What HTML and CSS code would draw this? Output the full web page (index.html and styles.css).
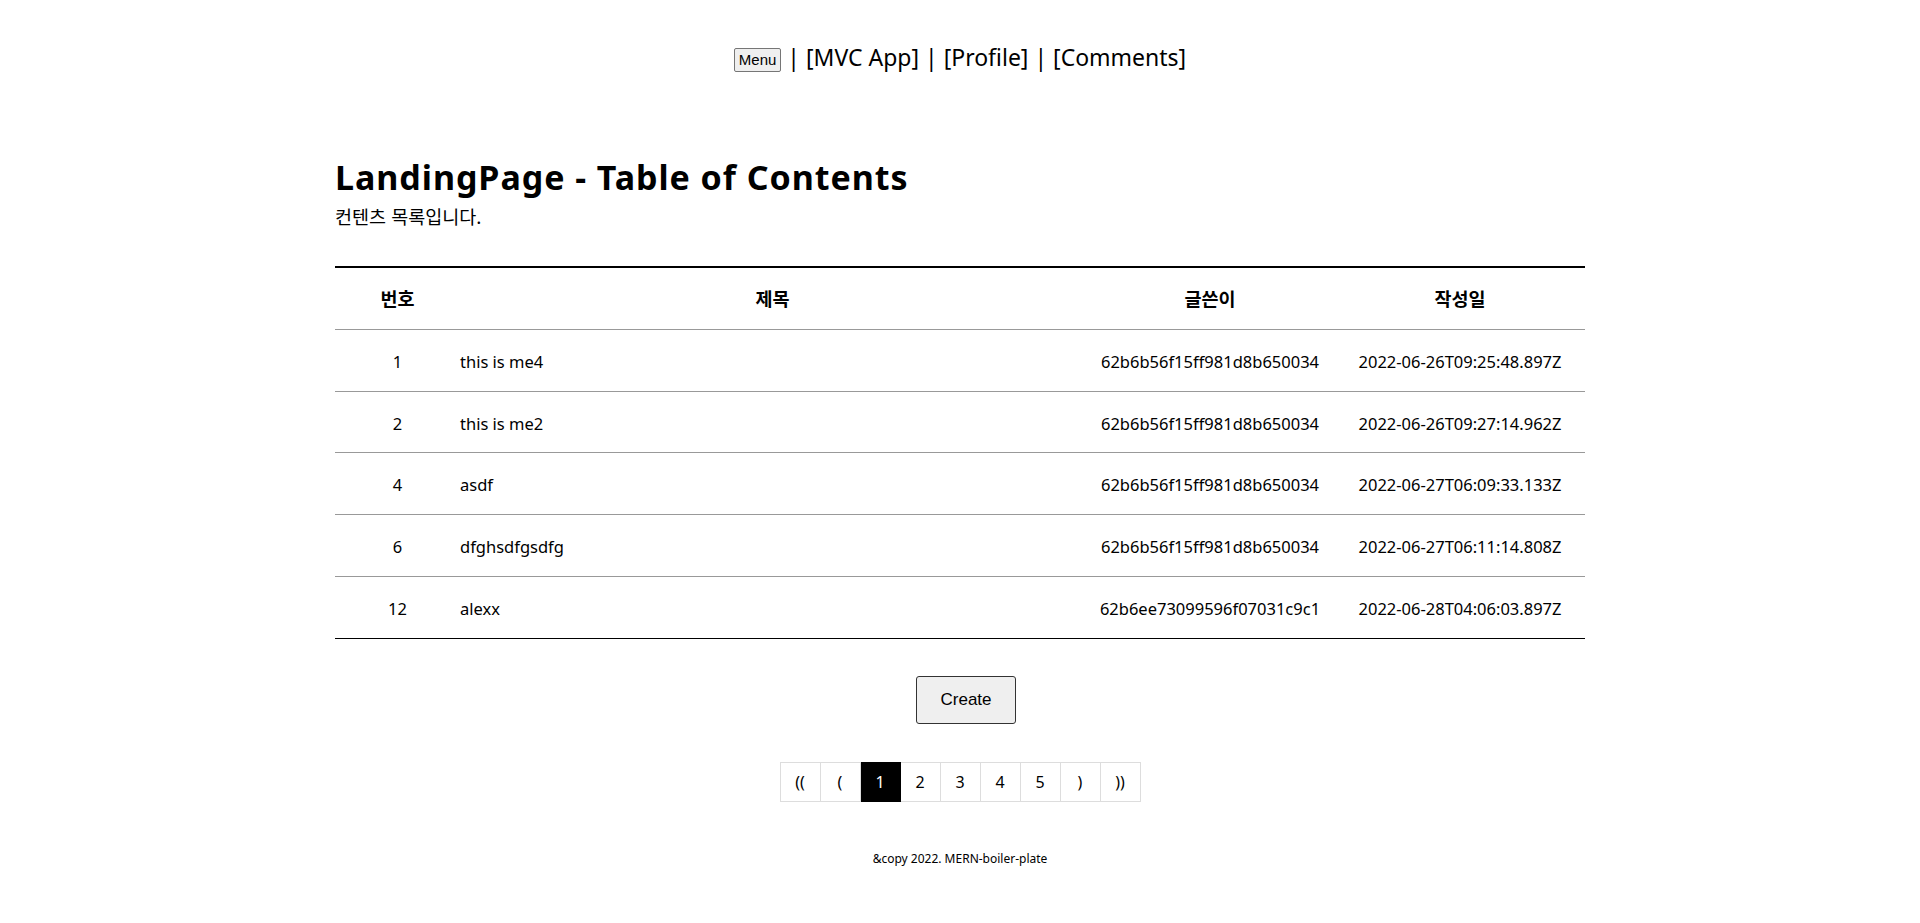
FILE: index.html
```html
<!DOCTYPE html>
<html lang="ko">
<head>
<meta charset="utf-8">
<title>LandingPage</title>
<link rel="stylesheet" href="styles.css">
</head>
<body>
<header class="topnav">
  <button class="menu-btn" type="button">Menu</button> | [MVC App] | [Profile] | [Comments]
</header>
<main class="container">
  <h1 class="page-title">LandingPage - Table of Contents</h1>
  <p class="page-desc">컨텐츠 목록입니다.</p>
  <table class="board">
    <colgroup>
      <col class="col-no">
      <col class="col-title">
      <col class="col-author">
      <col class="col-date">
    </colgroup>
    <thead>
      <tr><th>번호</th><th>제목</th><th>글쓴이</th><th>작성일</th></tr>
    </thead>
    <tbody>
      <tr><td class="c">1</td><td class="t">this is me4</td><td class="c">62b6b56f15ff981d8b650034</td><td class="c">2022-06-26T09:25:48.897Z</td></tr>
      <tr><td class="c">2</td><td class="t">this is me2</td><td class="c">62b6b56f15ff981d8b650034</td><td class="c">2022-06-26T09:27:14.962Z</td></tr>
      <tr><td class="c">4</td><td class="t">asdf</td><td class="c">62b6b56f15ff981d8b650034</td><td class="c">2022-06-27T06:09:33.133Z</td></tr>
      <tr><td class="c">6</td><td class="t">dfghsdfgsdfg</td><td class="c">62b6b56f15ff981d8b650034</td><td class="c">2022-06-27T06:11:14.808Z</td></tr>
      <tr><td class="c">12</td><td class="t">alexx</td><td class="c">62b6ee73099596f07031c9c1</td><td class="c">2022-06-28T04:06:03.897Z</td></tr>
    </tbody>
  </table>
  <div class="actions">
    <button class="create-btn" type="button">Create</button>
  </div>
  <nav class="pager">
    <a class="pg">((</a>
    <a class="pg">(</a>
    <a class="pg active">1</a>
    <a class="pg">2</a>
    <a class="pg">3</a>
    <a class="pg">4</a>
    <a class="pg">5</a>
    <a class="pg">)</a>
    <a class="pg">))</a>
  </nav>
</main>
<footer class="foot">&amp;copy 2022. MERN-boiler-plate</footer>
</body>
</html>
```
FILE: styles.css
```css
html, body {
  margin: 0;
  padding: 0;
  background: #fff;
  color: #000;
}
body {
  font-family: "Noto Sans", "Noto Sans CJK KR", sans-serif;
}
.topnav {
  padding-top: 41px;
  height: 32px;
  text-align: center;
  font-size: 23px;
  line-height: 32px;
}
.menu-btn {
  font-family: "Liberation Sans", Arial, sans-serif;
  font-size: 15px;
  line-height: 17px;
  padding: 2px 4px;
  height: 24px;
  background: #efefef;
  border: 1px solid #767676;
  border-radius: 2px;
  color: #000;
  vertical-align: 1px;
}
.container {
  width: 1250px;
  margin: 84px auto 0;
}
.page-title {
  margin: 0;
  font-size: 34px;
  line-height: 40px;
  font-weight: 700;
  letter-spacing: 0.95px;
}
.page-desc {
  margin: 7px 0 0;
  font-size: 18.5px;
  line-height: 24px;
  font-family: "Noto Sans CJK KR", sans-serif;
}
.board {
  width: 100%;
  margin-top: 38px;
  border-collapse: collapse;
  border-top: 2px solid #000;
  border-bottom: 1px solid #000;
  font-size: 16.5px;
}
.col-no { width: 10%; }
.col-title { width: 50%; }
.col-author { width: 20%; }
.col-date { width: 20%; }
.board th {
  font-family: "Noto Sans CJK KR", sans-serif;
  font-size: 18.5px;
  font-weight: 700;
  padding: 20px 0;
  line-height: 21px;
  border-bottom: 1px solid #999;
  text-align: center;
}
.board td {
  padding: 22px 0 18px;
  line-height: 20.7px;
  border-bottom: 1px solid #999;
}
.board tbody tr:last-child td {
  border-bottom: 1px solid #000;
}
.board .c { text-align: center; }
.board .t { text-align: left; }
.actions {
  display: flex;
  justify-content: center;
  margin-top: 37px;
  padding-left: 12px;
}
.create-btn {
  font-family: "Liberation Sans", Arial, sans-serif;
  font-size: 17px;
  line-height: 18px;
  padding: 14px 0;
  width: 100px;
  height: 48px;
  background: #efefef;
  border: 1px solid #333;
  border-radius: 3px;
  color: #000;
}
.pager {
  display: flex;
  justify-content: center;
  margin-top: 38px;
}
.pg {
  width: 40px;
  height: 40px;
  box-sizing: border-box;
  display: flex;
  align-items: center;
  justify-content: center;
  border: 1px solid #ddd;
  border-left: 0;
  font-size: 16px;
  color: #000;
}
.pg:first-child { border-left: 1px solid #ddd; width: 41px; }
.pg.active {
  background: #000;
  color: #fff;
  border-color: #000;
}
.foot {
  text-align: center;
  font-size: 12px;
  line-height: 16px;
  margin-top: 49px;
}
```
